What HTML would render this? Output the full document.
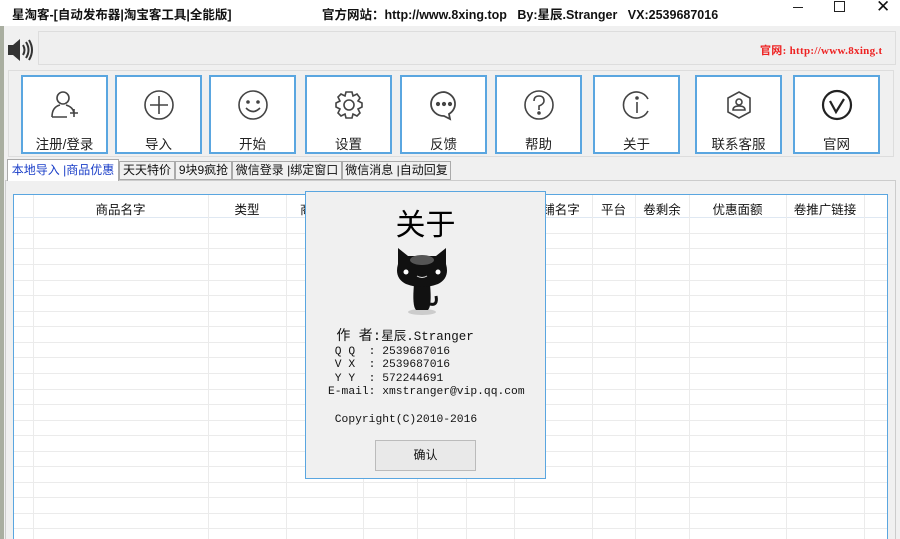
<!DOCTYPE html>
<html><head><meta charset="utf-8"><style>
*{margin:0;padding:0;box-sizing:border-box}
body{width:900px;height:539px;overflow:hidden;background:#f0f0f0;font-family:"Liberation Sans","Noto Sans CJK SC",sans-serif;position:relative;color:#111}
.abs{position:absolute}
.title{left:0;top:0;width:900px;height:26px;background:#fff}
.tt{font-size:12.5px;font-weight:bold;top:4px;white-space:nowrap}
.btn{position:absolute;top:75px;width:87px;height:79px;background:#fff;border:2px solid #5aa6e0}
.btn .lb{position:absolute;left:0;right:0;top:56px;text-align:center;font-size:13.5px;color:#222}
.btn svg{position:absolute;left:50%;top:12px;margin-left:-16px}
.tab{position:absolute;top:161px;height:19px;border:1px solid #aaa;background:#f0f0f0;font-size:12px;line-height:17px;text-align:center;white-space:nowrap;overflow:hidden}
.hd{position:absolute;top:199px;font-size:12.5px;text-align:center}
</style></head><body>
<div class="abs" style="left:0;top:0;width:4px;height:539px;background:#a9aea0"></div>
<div class="abs title"></div>
<div class="abs tt" style="left:12px">星淘客-[自动发布器|淘宝客工具|全能版]</div>
<div class="abs tt" style="left:322px">官方网站：http://www.8xing.top &nbsp;&nbsp;By:星辰.Stranger &nbsp;&nbsp;VX:2539687016</div>
<div class="abs" style="left:793px;top:7px;width:10px;height:1px;background:#222"></div>
<div class="abs" style="left:834px;top:1px;width:11px;height:11px;border:1px solid #222"></div>
<div class="abs" style="left:876px;top:-3px;font-size:17px">✕</div>
<svg class="abs" style="left:7px;top:37px" width="30" height="26"><rect x="1" y="8" width="5" height="10" fill="#333"/><path d="M6 8 L13 2 V24 L6 18Z" fill="#333"/><path d="M16 8 Q19 13 16 18 M19 5 Q24 13 19 21 M22 3 Q28 13 22 23" stroke="#333" stroke-width="2" fill="none"/></svg>
<div class="abs" style="left:38px;top:31px;width:858px;height:34px;border:1px solid #ddd;background:#efefef"></div>
<div class="abs" style="left:760px;top:42px;font-size:11px;color:#e22;font-family:'Liberation Serif','Noto Sans CJK SC',serif;font-weight:bold;white-space:nowrap;letter-spacing:0.3px">官网: http://www.8xing.t</div>
<div class="abs" style="left:8px;top:70px;width:886px;height:87px;border:1px solid #ddd"></div>

<div class="btn" style="left:21px"><svg width="32" height="32" viewBox="0 0 32 32" fill="none" stroke="#444" stroke-width="1.6"><circle cx="14" cy="9" r="6"/><path d="M3 28 Q3 18 11 16 M17 16 Q24 18 25 24 M3 28 H18 M25 20 V28 M21 24 H29"/></svg><div class="lb">注册/登录</div></div>
<div class="btn" style="left:115px"><svg width="32" height="32" viewBox="0 0 32 32" fill="none" stroke="#444" stroke-width="1.6"><circle cx="16" cy="16" r="14"/><path d="M16 7V25M7 16H25"/></svg><div class="lb">导入</div></div>
<div class="btn" style="left:209px"><svg width="32" height="32" viewBox="0 0 32 32" fill="none" stroke="#444" stroke-width="1.6"><circle cx="16" cy="16" r="14"/><circle cx="11" cy="13" r="1" fill="#444"/><circle cx="21" cy="13" r="1" fill="#444"/><path d="M9 19 Q16 26 23 19"/></svg><div class="lb">开始</div></div>
<div class="btn" style="left:305px"><svg width="32" height="32" viewBox="0 0 32 32" fill="none" stroke="#444" stroke-width="1.6"><path d="M13 3H19L20 7L24 5L27 9L25 12L29 14V18L25 20L27 24L24 27L20 25L19 29H13L12 25L8 27L5 24L7 20L3 18V14L7 12L5 8L8 5L12 7Z"/><circle cx="16" cy="16" r="5"/></svg><div class="lb">设置</div></div>
<div class="btn" style="left:400px"><svg width="32" height="32" viewBox="0 0 32 32" fill="none" stroke="#444" stroke-width="1.8"><path d="M16 3A13 12 0 1 0 16 27L22 30L21 25A13 12 0 0 0 16 3Z"/><circle cx="10" cy="15" r="1.2" fill="#444"/><circle cx="16" cy="15" r="1.2" fill="#444"/><circle cx="22" cy="15" r="1.2" fill="#444"/></svg><div class="lb">反馈</div></div>
<div class="btn" style="left:495px"><svg width="32" height="32" viewBox="0 0 32 32" fill="none" stroke="#444" stroke-width="1.6"><circle cx="16" cy="16" r="14"/><path d="M11 12Q11 7 16 7Q21 7 21 12Q21 15 16 17V21"/><circle cx="16" cy="24" r="1" fill="#444"/></svg><div class="lb">帮助</div></div>
<div class="btn" style="left:593px"><svg width="32" height="32" viewBox="0 0 32 32" fill="none" stroke="#444" stroke-width="1.6"><path d="M27 22A13 13 0 1 1 27 10"/><path d="M16 13V24"/><circle cx="16" cy="9" r="1" fill="#444"/></svg><div class="lb">关于</div></div>
<div class="btn" style="left:695px"><svg width="32" height="32" viewBox="0 0 32 32" fill="none" stroke="#444" stroke-width="1.6"><path d="M16 3L27 9V23L16 29L5 23V9Z"/><circle cx="16" cy="13" r="3"/><path d="M10 21Q10 17 16 17Q22 17 22 21Z"/></svg><div class="lb">联系客服</div></div>
<div class="btn" style="left:793px"><svg width="32" height="32" viewBox="0 0 32 32" fill="none" stroke="#222" stroke-width="2.2"><circle cx="16" cy="16" r="14"/><path d="M9 12L15 23L23 10"/></svg><div class="lb">官网</div></div>

<div class="abs" style="left:5px;top:180px;width:891px;height:359px;border:1px solid #ccc;border-bottom:none"></div>
<div class="tab" style="left:7px;top:159px;width:112px;height:22px;background:#fff;border-bottom:none;color:#1a3ec8;line-height:20px">本地导入 |商品优惠</div>
<div class="tab" style="left:119px;width:56px">天天特价</div>
<div class="tab" style="left:175px;width:57px">9块9疯抢</div>
<div class="tab" style="left:232px;width:110px">微信登录 |绑定窗口</div>
<div class="tab" style="left:342px;width:109px">微信消息 |自动回复</div>

<svg class="abs" style="left:0;top:0" width="900" height="539">
<rect x="13.5" y="194.5" width="874" height="350" fill="#fff" stroke="#5aa6e0"/>
<g stroke="#ebebeb" stroke-width="1">
<line x1="14" x2="887" y1="217.5" y2="217.5" stroke="#dfe8f2"/>
<line x1="14" x2="887" y1="233.5" y2="233.5"/><line x1="14" x2="887" y1="248.5" y2="248.5"/><line x1="14" x2="887" y1="264.5" y2="264.5"/><line x1="14" x2="887" y1="280.5" y2="280.5"/><line x1="14" x2="887" y1="295.5" y2="295.5"/><line x1="14" x2="887" y1="311.5" y2="311.5"/><line x1="14" x2="887" y1="326.5" y2="326.5"/><line x1="14" x2="887" y1="342.5" y2="342.5"/><line x1="14" x2="887" y1="357.5" y2="357.5"/><line x1="14" x2="887" y1="373.5" y2="373.5"/><line x1="14" x2="887" y1="389.5" y2="389.5"/><line x1="14" x2="887" y1="404.5" y2="404.5"/><line x1="14" x2="887" y1="420.5" y2="420.5"/><line x1="14" x2="887" y1="435.5" y2="435.5"/><line x1="14" x2="887" y1="451.5" y2="451.5"/><line x1="14" x2="887" y1="466.5" y2="466.5"/><line x1="14" x2="887" y1="482.5" y2="482.5"/><line x1="14" x2="887" y1="497.5" y2="497.5"/><line x1="14" x2="887" y1="513.5" y2="513.5"/><line x1="14" x2="887" y1="528.5" y2="528.5"/>
<line y1="195" y2="539" x1="33.5" x2="33.5"/><line y1="195" y2="539" x1="208.5" x2="208.5"/><line y1="195" y2="539" x1="286.5" x2="286.5"/><line y1="195" y2="539" x1="363.5" x2="363.5"/><line y1="195" y2="539" x1="417.5" x2="417.5"/><line y1="195" y2="539" x1="466.5" x2="466.5"/><line y1="195" y2="539" x1="514.5" x2="514.5"/><line y1="195" y2="539" x1="592.5" x2="592.5"/><line y1="195" y2="539" x1="635.5" x2="635.5"/><line y1="195" y2="539" x1="689.5" x2="689.5"/><line y1="195" y2="539" x1="786.5" x2="786.5"/><line y1="195" y2="539" x1="864.5" x2="864.5"/>
</g></svg>
<div class="hd" style="left:33px;width:175px">商品名字</div>
<div class="hd" style="left:208px;width:78px">类型</div>
<div class="hd" style="left:300px">商</div>
<div class="hd" style="left:530px;width:62px">铺名字</div>
<div class="hd" style="left:592px;width:43px">平台</div>
<div class="hd" style="left:635px;width:54px">卷剩余</div>
<div class="hd" style="left:689px;width:97px">优惠面额</div>
<div class="hd" style="left:786px;width:78px">卷推广链接</div>

<div class="abs" style="left:305px;top:191px;width:241px;height:288px;background:#f0f0f0;border:1px solid #5aa6e0">
<div class="abs" style="left:0;width:239px;top:8px;text-align:center;font-size:30px;color:#000">关于</div>
<svg class="abs" style="left:86px;top:52px" width="60" height="72" viewBox="0 0 60 72">
<ellipse cx="30" cy="68" rx="14" ry="3" fill="#ccc"/>
<path d="M22 40 Q20 62 24 66 H36 Q40 62 38 40Z" fill="#111"/>
<path d="M38 60 Q46 62 44 52" stroke="#111" stroke-width="3" fill="none"/>
<path d="M6 4 L16 12 H44 L54 4 L54 20 Q58 34 46 40 Q30 46 14 40 Q2 34 6 20Z" fill="#111"/>
<ellipse cx="30" cy="16" rx="12" ry="5" fill="#555"/>
<circle cx="14" cy="28" r="2.5" fill="#fff"/><circle cx="46" cy="28" r="2.5" fill="#fff"/>
<path d="M25 32 Q30 35 35 32" stroke="#ddd" fill="none"/>
</svg>
<div class="abs" style="left:22px;top:139px;font-family:'Liberation Mono','Noto Sans CJK SC',monospace;font-size:11.3px;line-height:13.6px;white-space:pre;color:#111"><span style="font-size:14px"> 作 者:</span><span style="font-size:12.5px">星辰.Stranger</span>
 Q Q  : 2539687016
 V X  : 2539687016
 Y Y  : 572244691
E-mail: xmstranger@vip.qq.com

 Copyright(C)2010-2016</div>
<div class="abs" style="left:69px;top:248px;width:101px;height:31px;border:1px solid #bbb;background:#e9e9e9;text-align:center;line-height:29px;font-size:12px">确认</div>
</div>
</body></html>
